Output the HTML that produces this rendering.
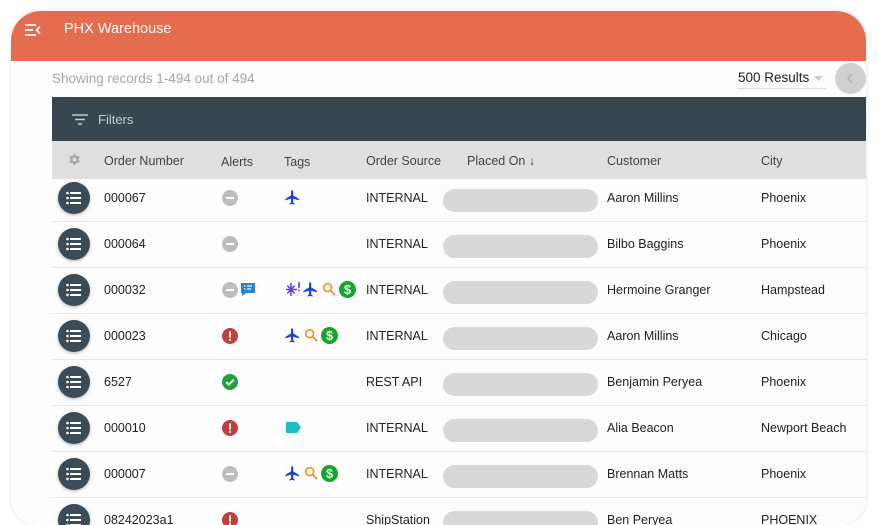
<!DOCTYPE html>
<html style="overflow:hidden;height:525px"><head><meta charset="utf-8"><style>
*{margin:0;padding:0;box-sizing:border-box}
body{width:878px;height:525px;overflow:hidden;background:#fff;font-family:"Liberation Sans",sans-serif;position:relative}
.card{position:absolute;left:11px;top:11px;width:855px;height:514px;background:#fdfdfd;border-radius:30px 30px 26px 26px;box-shadow:0 0 4px rgba(0,0,0,.12);overflow:hidden}
.hdr{position:absolute;left:0;top:0;width:855px;height:50px;background:#e56c4f}
.abs{position:absolute}
.t{position:absolute;font-size:12.5px;color:#222;white-space:nowrap}
.btn{position:absolute;left:47px;width:32px;height:32px;border-radius:50%;background:#3b4c58;box-shadow:0 1px 3px rgba(0,0,0,.3)}
.pill{position:absolute;left:432px;width:155px;height:23px;border-radius:12px;background:#d8d8d8}
.sep{position:absolute;left:41px;width:814px;height:1px;background:#e6e6e6}
.ic{position:absolute}
</style></head><body>
<div class="card">
 <div class="hdr"></div>
 <svg class="abs" style="left:13px;top:12px" width="18" height="14" viewBox="0 0 18 14"><g stroke="#fff" stroke-width="1.8" fill="none"><path d="M1 2h11M1 7h8M1 12h11M16 3.5l-3.5 3.5 3.5 3.5"/></g></svg>
 <div class="t" style="left:53px;top:10px;font-size:14.5px;color:#fff">PHX Warehouse</div>
 <div class="t" style="left:41px;top:60px;font-size:13.5px;color:#a5a5a5">Showing records 1-494 out of 494</div>
 <div class="t" style="left:727px;top:59px;font-size:13.5px;color:#222">500 Results</div>
 <svg class="abs" style="left:803px;top:65px" width="9" height="5"><path d="M0 0h9L4.5 5z" fill="#ccc"/></svg>
 <div class="abs" style="left:726px;top:77px;width:89px;height:1px;background:#ddd"></div>
 <div class="abs" style="left:824px;top:52px;width:31px;height:31px;border-radius:50%;background:#d0d0d0"></div>
 <svg class="abs" style="left:835px;top:62px" width="8" height="11"><path d="M6 1L2 5.5 6 10" stroke="#aaa" stroke-width="1.3" fill="none"/></svg>
 <div class="abs" style="left:41px;top:86px;width:814px;height:44px;background:#37464f"></div>
 <svg class="abs" style="left:61px;top:103px" width="16" height="11"><g stroke="#c7cdd1" stroke-width="1.4"><path d="M0 1h16M3 5.5h10M6 10h4"/></g></svg>
 <div class="t" style="left:87px;top:101px;font-size:13px;color:#c7cdd1">Filters</div>
 <div class="abs" style="left:41px;top:130px;width:814px;height:38px;background:#e0e0e0"></div>
 <svg class="abs" style="left:57px;top:142px" width="13" height="13" viewBox="0 0 24 24"><path fill="#aaa" d="M19.4 13c.04-.3.06-.65.06-1s-.02-.7-.07-1l2.1-1.650c.2-.15.24-.42.12-.64l-2-3.46c-.12-.22-.39-.3-.61-.22l-2.49 1c-.52-.4-1.080-.73-1.690-.98l-.38-2.650A.49.49 0 0014 2h-4c-.25 0-.46.18-.49.42l-.38 2.650c-.61.25-1.170.59-1.690.98l-2.490-1c-.23-.09-.49 0-.61.22l-2 3.460c-.13.22-.07.49.12.64L4.57 11c-.04.3-.07.66-.07 1s.02.7.07 1l-2.110 1.650c-.19.15-.24.42-.12.64l2 3.460c.12.22.39.3.61.22l2.490-1c.52.4 1.080.73 1.690.98l.38 2.650c.03.24.24.42.49.42h4c.25 0 .46-.18.49-.42l.38-2.650c.61-.25 1.170-.59 1.690-.98l2.490 1c.23.09.49 0 .61-.22l2-3.460c.12-.22.07-.49-.12-.64L19.4 13zM12 15.5A3.5 3.5 0 1112 8.5a3.5 3.5 0 010 7z"/></svg>
 <div class="t" style="left:93px;top:143px;color:#444">Order Number</div>
 <div class="t" style="left:210px;top:144px;color:#444">Alerts</div>
 <div class="t" style="left:273px;top:144px;color:#444">Tags</div>
 <div class="t" style="left:355px;top:143px;color:#444">Order Source</div>
 <div class="t" style="left:456px;top:143px;color:#444">Placed On ↓</div>
 <div class="t" style="left:596px;top:143px;color:#444">Customer</div>
 <div class="t" style="left:750px;top:143px;color:#444">City</div>
<div class="sep" style="top:210px"></div><div class="sep" style="top:256px"></div><div class="sep" style="top:302px"></div><div class="sep" style="top:348px"></div><div class="sep" style="top:394px"></div><div class="sep" style="top:440px"></div><div class="sep" style="top:486px"></div>
<svg width="0" height="0" style="position:absolute"><defs>
<symbol id="lst" viewBox="0 0 32 32"><g fill="#fff"><circle cx="9.5" cy="11" r="1.3"/><circle cx="9.5" cy="16" r="1.3"/><circle cx="9.5" cy="21" r="1.3"/><rect x="12" y="10" width="11" height="2"/><rect x="12" y="15" width="11" height="2"/><rect x="12" y="20" width="11" height="2"/></g></symbol>
<symbol id="min" viewBox="0 0 16 16"><circle cx="8" cy="8" r="8" fill="#bdbdbd"/><rect x="4" y="7" width="8" height="2" fill="#fff"/></symbol>
<symbol id="err" viewBox="0 0 16 16"><circle cx="8" cy="8" r="8" fill="#c0413b"/><rect x="7" y="3.5" width="2" height="6" fill="#fff"/><rect x="7" y="10.8" width="2" height="2" fill="#fff"/></symbol>
<symbol id="ok" viewBox="0 0 16 16"><circle cx="8" cy="8" r="8" fill="#22a33a"/><path d="M4.3 8.2l2.5 2.5 5-5" stroke="#fff" stroke-width="1.9" fill="none"/></symbol>
<symbol id="pl" viewBox="0 0 24 24"><path fill="#1b3fd8" d="M21 16v-2l-8-5V3.5c0-.83-.67-1.5-1.5-1.5S10 2.67 10 3.5V9l-8 5v2l8-2.5V19l-2 1.5V22l3.5-1 3.5 1v-1.5L13 19v-5.5l8 2.5z"/></symbol>
<symbol id="mg" viewBox="0 0 16 16"><circle cx="6" cy="6" r="4.2" stroke="#f5921e" stroke-width="1.8" fill="none"/><path d="M9 9l5 5" stroke="#f5921e" stroke-width="2"/></symbol>
<symbol id="dl" viewBox="0 0 16 16"><circle cx="8" cy="8" r="8" fill="#15a52c"/><text x="8" y="12.3" font-size="12" font-weight="bold" text-anchor="middle" fill="#fff" font-family="Liberation Sans">$</text></symbol>
</defs></svg>
<div class="btn" style="top:171px"><svg width="32" height="32"><use href="#lst"/></svg></div>
<div class="t" style="left:93px;top:180px">000067</div>
<svg class="ic" style="left:211px;top:179px" width="16" height="16"><use href="#min"/></svg>
<svg class="ic" style="left:273px;top:178px" width="17" height="17"><use href="#pl"/></svg>
<div class="t" style="left:355px;top:180px">INTERNAL</div><div class="pill" style="top:178px"></div>
<div class="t" style="left:596px;top:180px">Aaron Millins</div><div class="t" style="left:750px;top:180px">Phoenix</div>
<div class="btn" style="top:217px"><svg width="32" height="32"><use href="#lst"/></svg></div>
<div class="t" style="left:93px;top:226px">000064</div>
<svg class="ic" style="left:211px;top:225px" width="16" height="16"><use href="#min"/></svg>
<div class="t" style="left:355px;top:226px">INTERNAL</div><div class="pill" style="top:224px"></div>
<div class="t" style="left:596px;top:226px">Bilbo Baggins</div><div class="t" style="left:750px;top:226px">Phoenix</div>
<div class="btn" style="top:263px"><svg width="32" height="32"><use href="#lst"/></svg></div>
<div class="t" style="left:93px;top:272px">000032</div>
<svg class="ic" style="left:211px;top:271px" width="16" height="16"><use href="#min"/></svg>
<svg class="ic" style="left:229px;top:270px" width="16" height="16"><path d="M1 2h14v10H6l-4 3v-3H1z" fill="#2a7de1"/><path d="M4 5h1.5M4 8h1.5M7 5h5M7 8h4" stroke="#fff" stroke-width="1.2"/></svg>
<svg class="ic" style="left:274px;top:270px" width="16" height="16"><g stroke="#6a3cf0" stroke-width="1.6"><path d="M6 2v13M1 8.5h11M2.3 4.5l7.4 8M9.7 4.5l-7.4 8"/><path d="M14 1v6M14 8.5v1.8"/></g></svg>
<svg class="ic" style="left:291px;top:270px" width="17" height="17"><use href="#pl"/></svg>
<svg class="ic" style="left:311px;top:271px" width="15" height="15"><use href="#mg"/></svg>
<svg class="ic" style="left:328px;top:270px" width="17" height="17"><use href="#dl"/></svg>
<div class="t" style="left:355px;top:272px">INTERNAL</div><div class="pill" style="top:270px"></div>
<div class="t" style="left:596px;top:272px">Hermoine Granger</div><div class="t" style="left:750px;top:272px">Hampstead</div>
<div class="btn" style="top:309px"><svg width="32" height="32"><use href="#lst"/></svg></div>
<div class="t" style="left:93px;top:318px">000023</div>
<svg class="ic" style="left:211px;top:317px" width="16" height="16"><use href="#err"/></svg>
<svg class="ic" style="left:273px;top:316px" width="17" height="17"><use href="#pl"/></svg>
<svg class="ic" style="left:293px;top:317px" width="15" height="15"><use href="#mg"/></svg>
<svg class="ic" style="left:310px;top:316px" width="17" height="17"><use href="#dl"/></svg>
<div class="t" style="left:355px;top:318px">INTERNAL</div><div class="pill" style="top:316px"></div>
<div class="t" style="left:596px;top:318px">Aaron Millins</div><div class="t" style="left:750px;top:318px">Chicago</div>
<div class="btn" style="top:355px"><svg width="32" height="32"><use href="#lst"/></svg></div>
<div class="t" style="left:93px;top:364px">6527</div>
<svg class="ic" style="left:211px;top:363px" width="16" height="16"><use href="#ok"/></svg>
<div class="t" style="left:355px;top:364px">REST API</div><div class="pill" style="top:362px"></div>
<div class="t" style="left:596px;top:364px">Benjamin Peryea</div><div class="t" style="left:750px;top:364px">Phoenix</div>
<div class="btn" style="top:401px"><svg width="32" height="32"><use href="#lst"/></svg></div>
<div class="t" style="left:93px;top:410px">000010</div>
<svg class="ic" style="left:211px;top:409px" width="16" height="16"><use href="#err"/></svg>
<svg class="ic" style="left:275px;top:411px" width="16" height="11"><path d="M1 0h10l4 5.5-4 5.5H1a1 1 0 01-1-1V1a1 1 0 011-1z" fill="#23bcc4"/></svg>
<div class="t" style="left:355px;top:410px">INTERNAL</div><div class="pill" style="top:408px"></div>
<div class="t" style="left:596px;top:410px">Alia Beacon</div><div class="t" style="left:750px;top:410px">Newport Beach</div>
<div class="btn" style="top:447px"><svg width="32" height="32"><use href="#lst"/></svg></div>
<div class="t" style="left:93px;top:456px">000007</div>
<svg class="ic" style="left:211px;top:455px" width="16" height="16"><use href="#min"/></svg>
<svg class="ic" style="left:273px;top:454px" width="17" height="17"><use href="#pl"/></svg>
<svg class="ic" style="left:293px;top:455px" width="15" height="15"><use href="#mg"/></svg>
<svg class="ic" style="left:310px;top:454px" width="17" height="17"><use href="#dl"/></svg>
<div class="t" style="left:355px;top:456px">INTERNAL</div><div class="pill" style="top:454px"></div>
<div class="t" style="left:596px;top:456px">Brennan Matts</div><div class="t" style="left:750px;top:456px">Phoenix</div>
<div class="btn" style="top:493px"><svg width="32" height="32"><use href="#lst"/></svg></div>
<div class="t" style="left:93px;top:502px">08242023a1</div>
<svg class="ic" style="left:211px;top:501px" width="16" height="16"><use href="#err"/></svg>
<div class="t" style="left:355px;top:502px">ShipStation</div><div class="pill" style="top:500px"></div>
<div class="t" style="left:596px;top:502px">Ben Peryea</div><div class="t" style="left:750px;top:502px">PHOENIX</div>
</div>
</body></html>
